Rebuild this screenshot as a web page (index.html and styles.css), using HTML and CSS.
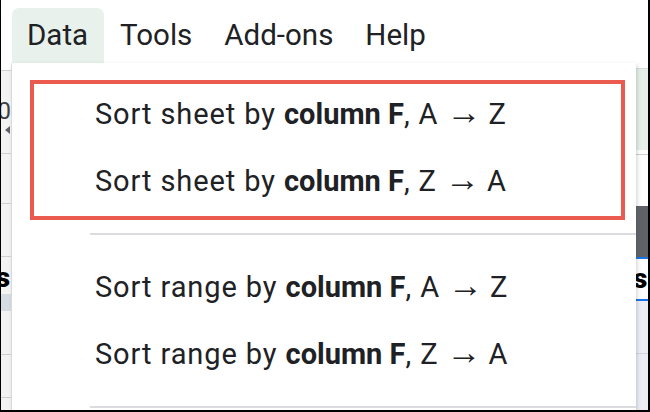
FILE: index.html
```html
<!DOCTYPE html>
<html>
<head>
<meta charset="utf-8">
<link rel="stylesheet" href="styles.css">
</head>
<body>
<div class="frame">
  <div class="menubar">
    <div class="mb-item active">Data</div>
    <div class="mb-item">Tools</div>
    <div class="mb-item">Add-ons</div>
    <div class="mb-item">Help</div>
  </div>
  <div class="stage">
    <div class="strip left">
      <div class="cell c1"></div>
      <div class="cell c2"><span class="digit">0</span><span class="tri"></span></div>
      <div class="cell c3"></div>
      <div class="cell c4"></div>
      <div class="cell c5"><span class="bold-s">s</span></div>
      <div class="cell c6"></div>
      <div class="cell c7"></div>
      <div class="cell c8"></div>
      <div class="cell c9"></div>
    </div>
    <div class="menu">
      <div class="item"><span>Sort sheet by&nbsp;<b>column F</b>, A<span class="arr">→</span>Z</span></div>
      <div class="item"><span>Sort sheet by&nbsp;<b>column F</b>, Z<span class="arr">→</span>A</span></div>
      <div class="sep"></div>
      <div class="item"><span>Sort range by&nbsp;<b>column F</b>, A<span class="arr">→</span>Z</span></div>
      <div class="item"><span>Sort range by&nbsp;<b>column F</b>, Z<span class="arr">→</span>A</span></div>
      <div class="sep"></div>
      <div class="highlight"></div>
    </div>
    <div class="strip right">
      <div class="r r1"></div>
      <div class="r r2"></div>
      <div class="r r3"></div>
      <div class="r r4"></div>
      <div class="r r5"></div>
      <div class="r r6"><span class="bold-s">s</span></div>
      <div class="r r7"></div>
      <div class="r r8"></div>
    </div>
  </div>
</div>
</body>
</html>
```

FILE: styles.css
```css
* { box-sizing: border-box; }
html, body { margin: 0; padding: 0; background: #fff; }
body { font-family: Roboto, "Liberation Sans", sans-serif; color: #202124; }

.frame {
  width: 650px;
  height: 412px;
  border-left: 1px solid #000;
  border-right: 2px solid #000;
  border-bottom: 2px solid #000;
  display: flex;
  flex-direction: column;
  overflow: hidden;
  background: #fff;
}

.menubar {
  height: 63px;
  display: flex;
  align-items: flex-end;
  padding-left: 11px;
  flex: none;
}
.mb-item {
  height: 55px;
  padding: 0 16px;
  font-size: 29.5px;
  line-height: 55px;
  color: #202124;
  border-radius: 7px 7px 0 0;
}
.mb-item:first-child { padding-left: 15px; }
.mb-item.active { background: #e8f1eb; }

.stage {
  flex: 1;
  display: flex;
  min-height: 0;
}

.strip { flex: none; display: flex; flex-direction: column; overflow: hidden; }
.strip.left { width: 11px; background: #f3f3f3; border-right: 1px solid #e4e4e4; }
.strip.right { width: 12px; background: #fff; }

.cell { border-bottom: 1px solid #cfcfcf; position: relative; flex: none; }
.c1 { height: 8px; background: #fff; }
.c2 { height: 83px; }
.c3 { height: 50px; }
.c4 { height: 53px; }
.c5 { height: 37px; border-bottom: none; }
.c6 { height: 17px; background: #d6dce3; border-bottom: none; }
.c7 { height: 44px; }
.c8 { height: 43px; }
.c9 { flex: 1; border-bottom: none; }

.digit {
  position: absolute;
  right: 0;
  top: 28px;
  font-size: 24px;
  line-height: 24px;
  color: #3c4043;
}
.tri {
  position: absolute;
  right: 1px;
  top: 55px;
  width: 0; height: 0;
  border-top: 4px solid transparent;
  border-bottom: 4px solid transparent;
  border-right: 5px solid #5f6368;
}
.bold-s {
  position: absolute;
  right: 1px;
  bottom: 2px;
  font-size: 28px;
  line-height: 28px;
  font-weight: 900;
  color: #000;
}
.r { flex: none; position: relative; }
.r1 { height: 6px; border-bottom: 1px solid #dcdcdc; }
.r2 { height: 81px; background: #e6efe8; }
.r3 { border-bottom: 1px solid #d0d0d0; height: 5px; }
.r4 { height: 51px; }
.r5 { height: 53px; background: #5f6368; border-bottom: 2px solid #1a73e8; }
.r6 { height: 42px; border-bottom: 2px solid #1a73e8; }
.r6 .bold-s { left: -3px; right: auto; bottom: 6px; }
.r7 { height: 53px; background: #eceef5; border-bottom: 1px solid #d3d6e0; }
.r8 { flex: 1; background: #eceef5; }

.menu {
  width: 624px;
  flex: none;
  background: #fff;
  position: relative;
  padding-top: 17px;
  box-shadow: 1px 2px 4px rgba(60,64,67,0.25);
  z-index: 1;
}
.item {
  height: 67px;
  display: flex;
  align-items: center;
  padding-left: 83px;
  font-size: 29px;
  line-height: 34px;
  letter-spacing: 0.9px;
  color: #202124;
  white-space: nowrap;
}
.item b { font-weight: 700; letter-spacing: 0; }
.item .arr {
  font-family: "Liberation Sans", sans-serif;
  font-size: 35px;
  line-height: 20px;
  letter-spacing: 0;
  margin: 0 7px 0 8px;
}
.sep {
  margin: 19px 0 18px 78px;
  height: 2px;
  background: #dadce0;
}
.highlight {
  position: absolute;
  left: 18px;
  top: 17px;
  width: 595px;
  height: 140px;
  border: 4px solid #eb5a4f;
}
```
